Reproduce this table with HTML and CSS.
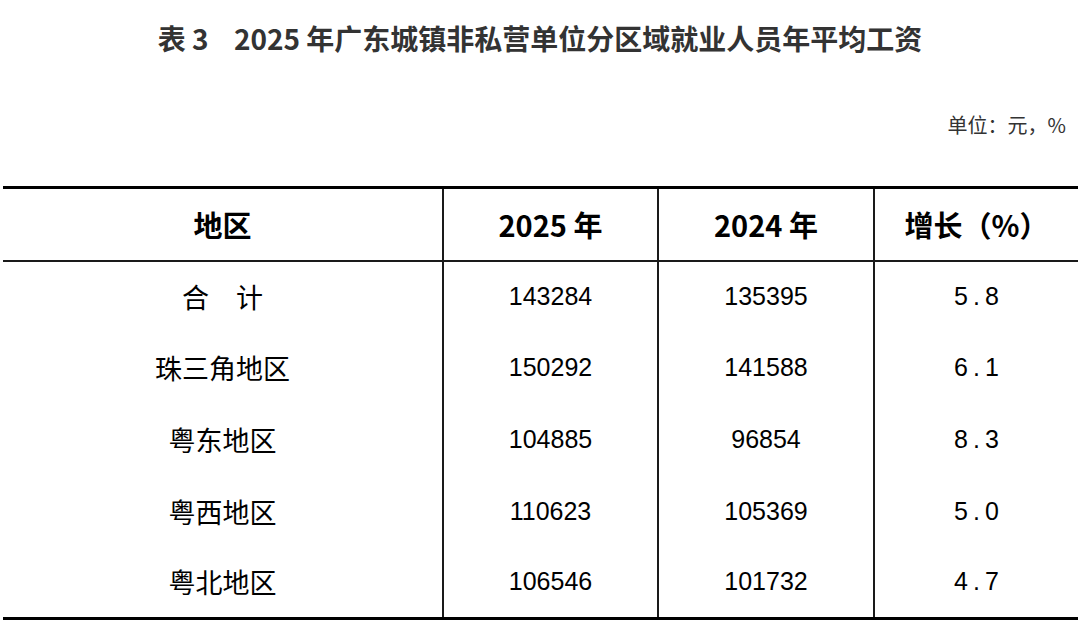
FILE: index.html
```html
<!DOCTYPE html>
<html lang="zh-CN">
<head>
<meta charset="utf-8">
<title>表3 2025年广东城镇非私营单位分区域就业人员年平均工资</title>
<link rel="stylesheet" href="styles.css">
</head>
<body>
<div class="page">
  <h1 class="title">表 3&nbsp;&nbsp;&nbsp;&nbsp;2025 年广东城镇非私营单位分区域就业人员年平均工资</h1>
  <div class="unit">单位：元，%</div>
  <table class="data">
    <thead>
      <tr>
        <th class="c1">地区</th>
        <th class="c2">2025 年</th>
        <th class="c3">2024 年</th>
        <th class="c4">增长（%）</th>
      </tr>
    </thead>
    <tbody>
      <tr><td>合　计</td><td>143284</td><td>135395</td><td class="pct">5.8</td></tr>
      <tr><td>珠三角地区</td><td>150292</td><td>141588</td><td class="pct">6.1</td></tr>
      <tr><td>粤东地区</td><td>104885</td><td>96854</td><td class="pct">8.3</td></tr>
      <tr><td>粤西地区</td><td>110623</td><td>105369</td><td class="pct">5.0</td></tr>
      <tr><td>粤北地区</td><td>106546</td><td>101732</td><td class="pct">4.7</td></tr>
    </tbody>
  </table>
</div>
</body>
</html>
```

FILE: styles.css
```css
* { box-sizing: border-box; }
html, body { margin: 0; padding: 0; background: #fff; }
body {
  width: 1080px;
  height: 628px;
  overflow: hidden;
  font-family: "Liberation Sans", "Noto Sans CJK SC", sans-serif;
  color: #000;
}
.page { display: flex; flex-direction: column; }
.title {
  margin: 0;
  height: 76px;
  line-height: 76px;
  text-align: center;
  font-family: "Noto Sans CJK SC", sans-serif;
  font-weight: bold;
  font-size: 28px;
  color: #333;
}
.unit {
  margin-top: 36px;
  height: 26px;
  line-height: 26px;
  text-align: right;
  padding-right: 14px;
  font-family: "Noto Sans CJK SC", sans-serif;
  font-size: 20px;
  color: #333;
}
.data {
  margin-top: 48px;
  margin-left: 3px;
  width: 1075px;
  border-collapse: collapse;
  table-layout: fixed;
  border-top: 3px solid #000;
  border-bottom: 3px solid #000;
}
.data th, .data td {
  padding: 0;
  text-align: center;
  vertical-align: middle;
}
.data th + th, .data td + td { border-left: 2px solid #1a1a1a; }
.data th {
  height: 73px;
  font-family: "Noto Sans CJK SC", sans-serif;
  font-weight: bold;
  font-size: 29px;
  border-bottom: 2px solid #1a1a1a;
}
.data td {
  height: 71.6px;
  font-size: 25px;
  font-family: "Liberation Sans", "Noto Sans CJK SC", sans-serif;
}
.data tbody td:first-child { font-family: "Noto Sans CJK SC", sans-serif; font-size: 27px; }
.c1 { width: 440px; }
.c2 { width: 215px; }
.c3 { width: 216px; }
.c4 { width: 204px; }
.pct { letter-spacing: 5px; padding-left: 5px !important; }
```
